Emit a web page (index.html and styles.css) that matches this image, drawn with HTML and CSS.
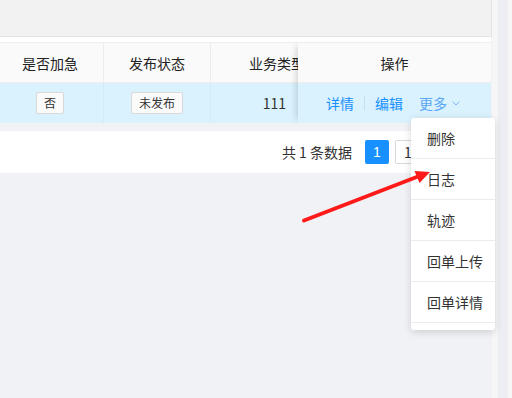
FILE: index.html
```html
<!DOCTYPE html>
<html lang="zh-CN">
<head>
    <meta charset="UTF-8">
    <title>订单列表</title>
    <link rel="stylesheet" href="styles.css">
</head>
<body>
    <div class="screen">
        <div class="page">
            <div class="search-box"></div>

            <div class="table-card">
                <div class="table-scroll">
                    <div class="trow thead">
                        <div class="cell c1">是否加急</div>
                        <div class="cell c2">发布状态</div>
                        <div class="cell c3">业务类型</div>
                    </div>
                    <div class="trow tbody">
                        <div class="cell c1"><span class="tag">否</span></div>
                        <div class="cell c2"><span class="tag">未发布</span></div>
                        <div class="cell c3">111</div>
                    </div>
                </div>
                <!-- fixed right column -->
                <div class="fixed-col">
                    <div class="fcell fhead">操作</div>
                    <div class="fcell fbody">
                        <a class="op">详情</a>
                        <span class="op-divider"></span>
                        <a class="op">编辑</a>
                        <a class="op more">更多
                            <svg width="8" height="5" viewBox="0 0 8 5"><path d="M0.5 0.5 L4 4 L7.5 0.5" fill="none" stroke="#7ab8f5" stroke-width="1"/></svg>
                        </a>
                    </div>
                </div>
            </div>

            <div class="gap"></div>

            <div class="pager">
                <span class="total">共 1 条数据</span>
                <span class="page-item active">1</span>
                <span class="page-size">10 条/页</span>
            </div>
        </div>
        <div class="edge"></div>
        <div class="scrollbar"></div>
    </div>

    <ul class="dropdown">
        <li>删除</li>
        <li>日志</li>
        <li>轨迹</li>
        <li>回单上传</li>
        <li>回单详情</li>
    </ul>

    <svg class="arrow" width="512" height="398" viewBox="0 0 512 398">
        <line x1="304" y1="220.5" x2="418" y2="176.5" stroke="#ff1a1a" stroke-width="4" stroke-linecap="round"/>
        <polygon points="430,172 414.5,171 419.5,183" fill="#ff1a1a"/>
    </svg>
</body>
</html>
```

FILE: styles.css
```css
body {
    margin: 0;
    font-family: "Noto Sans CJK SC", "Liberation Sans", sans-serif;
    font-size: 14px;
    color: #333;
    background-color: #f0f2f5;
}
.screen {
    display: flex;
    width: 512px;
    height: 398px;
    overflow: hidden;
}
.page {
    width: 492px;
    flex: none;
}
.edge {
    width: 6px;
    background-color: #f6f6f6;
}
.scrollbar {
    width: 10px;
    background-color: #eceef3;
    border-right: 4px solid #f6f6f7;
}
.search-box {
    height: 36px;
    background-color: #f2f2f2;
    border-bottom: 1px solid #e2e2e2;
    border-right: 1px solid #e2e2e2;
}
.table-card {
    position: relative;
    background-color: #fff;
    padding-top: 5px;
    width: 491px;
    height: 81px;
    overflow: hidden;
}
.table-scroll {
    margin-left: -3px;
}
.trow {
    display: flex;
}
.thead {
    height: 39px;
    background-color: #fafafa;
    border-top: 1px solid #eeeeee;
    border-bottom: 1px solid #eeeeee;
    color: #222;
}
.tbody {
    height: 40px;
    background-color: #daf2fd;
}
.cell {
    display: flex;
    align-items: center;
    justify-content: center;
    flex: none;
    box-sizing: border-box;
}
.c1 {
    width: 107px;
    border-right: 1px solid #ececec;
}
.c2 {
    width: 107px;
    border-right: 1px solid #ececec;
}
.tbody .c1,
.tbody .c2 {
    border-right-color: #d3ecf7;
}
.c3 {
    width: 110px;
    justify-content: flex-end;
    padding-right: 16px;
}
.tbody .c3 {
    padding-right: 35px;
}
.tag {
    display: inline-block;
    height: 20px;
    line-height: 20px;
    padding: 0 7px;
    font-size: 12px;
    background-color: #fafafa;
    border: 1px solid #d9d9d9;
    border-radius: 2px;
}
.fixed-col {
    position: absolute;
    top: 5px;
    right: 0;
    width: 193px;
    box-shadow: -6px 0 6px -4px rgba(0, 0, 0, 0.15);
}
.fcell {
    display: flex;
    align-items: center;
}
.fhead {
    justify-content: center;
    height: 39px;
    background-color: #fafafa;
    border-top: 1px solid #eeeeee;
    border-bottom: 1px solid #eeeeee;
    color: #222;
}
.fbody {
    height: 40px;
    background-color: #daf2fd;
    padding-left: 28px;
}
.op {
    color: #1890ff;
}
.op-divider {
    width: 1px;
    height: 14px;
    margin: 0 10px;
    background-color: #c6dfee;
}
.more {
    margin-left: 16px;
    display: flex;
    align-items: center;
    gap: 5px;
    color: #5aa6f7;
}
.gap {
    height: 8px;
}
.pager {
    display: flex;
    align-items: center;
    justify-content: flex-end;
    height: 42px;
    width: 497px;
    padding-right: 22px;
    box-sizing: border-box;
    background-color: #fff;
}
.total {
    margin-right: 13px;
}
.page-item {
    width: 24px;
    height: 24px;
    line-height: 24px;
    text-align: center;
    border-radius: 2px;
    font-family: "Liberation Sans", sans-serif;
}
.active {
    background-color: #1890ff;
    color: #fff;
}
.page-size {
    width: 80px;
    height: 24px;
    line-height: 22px;
    margin-left: 6px;
    padding-left: 8px;
    box-sizing: border-box;
    border: 1px solid #d9d9d9;
    border-radius: 2px;
}
.dropdown {
    position: absolute;
    left: 411px;
    top: 118px;
    width: 84px;
    margin: 0;
    padding: 0 0 7px;
    list-style: none;
    background-color: #fff;
    border-radius: 3px;
    box-shadow: 0 2px 8px rgba(0, 0, 0, 0.15);
}
.dropdown li {
    height: 40px;
    line-height: 40px;
    padding-left: 16px;
    color: #333;
    border-bottom: 1px solid #ebebeb;
}
.arrow {
    position: absolute;
    left: 0;
    top: 0;
}
```
